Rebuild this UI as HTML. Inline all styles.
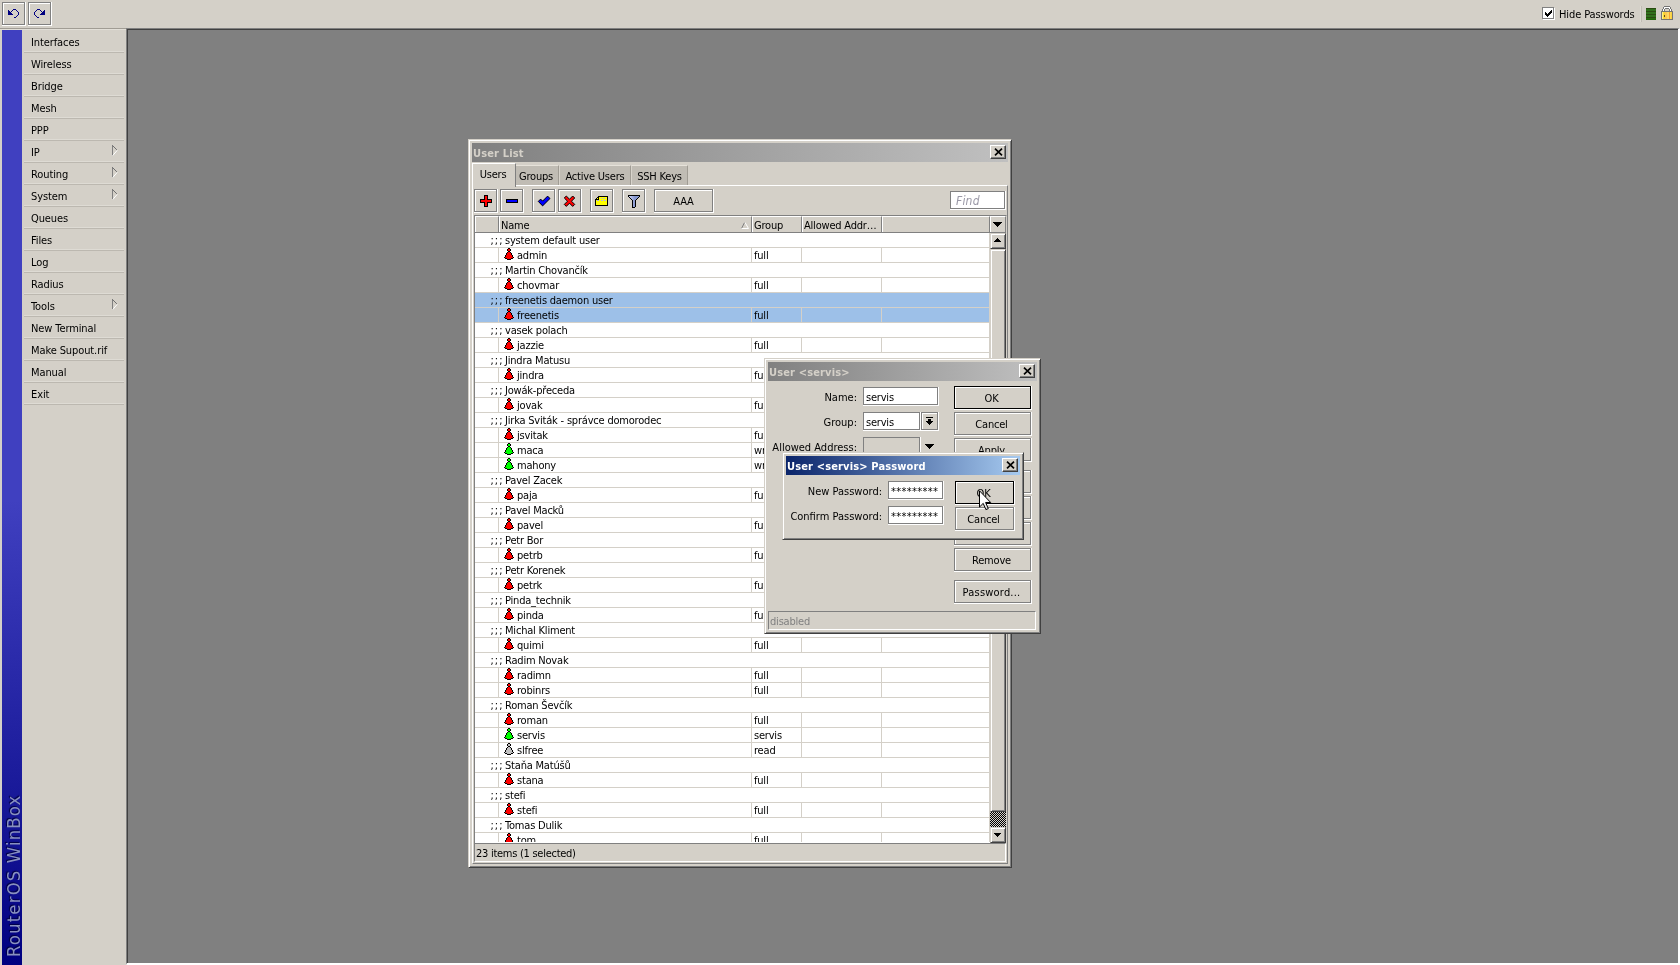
<!DOCTYPE html>
<html lang="en"><head><meta charset="utf-8"><title>WinBox</title>
<style>
*{box-sizing:border-box;margin:0;padding:0}
html,body{width:1680px;height:965px;overflow:hidden;background:#d4d0c8}
body{position:relative;font:11px/14px "DejaVu Sans Condensed","DejaVu Sans","Liberation Sans",sans-serif;font-stretch:condensed;letter-spacing:-0.2px;color:#000;-webkit-font-smoothing:none}
div,span,svg,b,i{position:absolute}
b{font-weight:normal}
svg{overflow:visible}
.px{shape-rendering:crispEdges}
/* etched button */
.eb{border:1px solid #808080;box-shadow:1px 1px 0 #fff,0 1px 0 #fff,1px 0 0 #fff,inset 1px 1px 0 #fff;background:#d4d0c8;text-align:center;white-space:nowrap}
.eb.def{border-color:#000}
.tb{width:23px;height:23px;top:189px}
.bt{width:77px;height:23px;left:954px;line-height:21px;padding:1px 2px 0 0}
/* window frame */
.win{background:#d4d0c8;border:1px solid;border-color:#d4d0c8 #404040 #404040 #d4d0c8;box-shadow:inset 1px 1px 0 #fff,inset -1px -1px 0 #808080}
.ttl{left:3px;top:3px;height:19px;font-weight:bold;line-height:19px;padding:1px 0 0 1px;white-space:nowrap;letter-spacing:0.15px}
.ttl.in{background:linear-gradient(90deg,#808080,#c0c0c0);color:#d4d0c8}
.ttl.ac{background:linear-gradient(90deg,#0a246a,#a6caf0);color:#fff}
.cls{width:16px;height:14px;background:#d4d0c8;border:1px solid;border-color:#fff #404040 #404040 #fff;box-shadow:inset -1px -1px 0 #808080}
.cls svg{left:3px;top:2px}
/* sunken field */
.fld{height:18px;background:#fff;border:1px solid #808080;box-shadow:1px 1px 0 #fff,0 1px 0 #fff,1px 0 0 #fff;line-height:14px;padding:3px 0 0 2px;white-space:nowrap;overflow:hidden}
.lbl{text-align:right;white-space:nowrap;line-height:14px;letter-spacing:0;margin:1px 0 0 1px}
.pw{letter-spacing:0.3px;padding-left:2px}
/* menu */
.mi{position:relative;display:block;height:22px;line-height:22px;letter-spacing:-0.1px;padding:1px 0 0 7px;margin:0 2px 0 2px;border-bottom:1px solid #bcb8b0;white-space:nowrap}
.mi:after{content:"";position:absolute;left:0;right:0;bottom:0;height:1px;background:#dedbd4}
.mi .arr{left:88px;top:4px}
/* table */
.r{position:relative;display:block;height:15px;border-bottom:1px solid #d4d0c8;width:514px;white-space:nowrap;overflow:hidden}
.r.sel{background:#9dc0e8}
.r span{top:1px;line-height:14px}
.r.c .s{left:15.5px;letter-spacing:1px}.r.c .t{left:30px}
.r.u span{left:42px}
.r.u b{left:279px;top:1px;line-height:14px}
.r.u .ic{left:29px;top:0;width:10px;height:12px}
.r.u i{top:0;width:1px;height:14px;background:#d4d0c8}
.r.u i:nth-child(1){left:23px}.r.u i:nth-child(2){left:276px}.r.u i:nth-child(3){left:326px}.r.u i:nth-child(4){left:406px}
.hc{top:0;height:16px;background:#d4d0c8;border:1px solid;border-color:#fff #808080 #d4d0c8 #fff;border-bottom:0;line-height:14px;padding:2px 0 0 1px;white-space:nowrap;overflow:hidden}
.tab{background:#c0bcb4;border-right:1px solid #a09c94;border-left:1px solid #d8d4cc;border-top:1px solid #e6e2da;top:25px;height:20px;line-height:14px;padding:4px 0 0 0;text-align:center;white-space:nowrap}
</style></head><body><div id="root" style="left:0;top:0;width:1680px;height:965px;will-change:transform">
<svg width="0" height="0"><defs><symbol id="ur" viewBox="0 0 10 12"><path d="M4 0h2v1h-2zM3 1h1v1h-1zM6 1h1v1h-1zM3 2h1v1h-1zM6 2h1v1h-1zM4 3h2v1h-2zM3 4h1v1h-1zM6 4h1v1h-1zM2 5h1v1h-1zM7 5h1v1h-1zM2 6h1v1h-1zM7 6h1v1h-1zM1 7h1v1h-1zM8 7h1v1h-1zM1 8h1v1h-1zM8 8h1v1h-1zM0 9h1v1h-1zM9 9h1v1h-1zM1 10h2v1h-2zM7 10h2v1h-2zM3 11h4v1h-4z" fill="#000"/><path d="M4 1h2v1h-2zM4 2h2v1h-2zM4 4h2v1h-2zM3 5h4v1h-4zM3 6h4v1h-4zM2 7h6v1h-6zM2 8h6v1h-6zM1 9h8v1h-8zM3 10h4v1h-4z" fill="#ff0000"/></symbol><symbol id="ug" viewBox="0 0 10 12"><path d="M4 0h2v1h-2zM3 1h1v1h-1zM6 1h1v1h-1zM3 2h1v1h-1zM6 2h1v1h-1zM4 3h2v1h-2zM3 4h1v1h-1zM6 4h1v1h-1zM2 5h1v1h-1zM7 5h1v1h-1zM2 6h1v1h-1zM7 6h1v1h-1zM1 7h1v1h-1zM8 7h1v1h-1zM1 8h1v1h-1zM8 8h1v1h-1zM0 9h1v1h-1zM9 9h1v1h-1zM1 10h2v1h-2zM7 10h2v1h-2zM3 11h4v1h-4z" fill="#000"/><path d="M4 1h2v1h-2zM4 2h2v1h-2zM4 4h2v1h-2zM3 5h4v1h-4zM3 6h4v1h-4zM2 7h6v1h-6zM2 8h6v1h-6zM1 9h8v1h-8zM3 10h4v1h-4z" fill="#00ff00"/></symbol><symbol id="uw" viewBox="0 0 10 12"><path d="M4 0h2v1h-2zM3 1h1v1h-1zM6 1h1v1h-1zM3 2h1v1h-1zM6 2h1v1h-1zM4 3h2v1h-2zM3 4h1v1h-1zM6 4h1v1h-1zM2 5h1v1h-1zM7 5h1v1h-1zM2 6h1v1h-1zM7 6h1v1h-1zM1 7h1v1h-1zM8 7h1v1h-1zM1 8h1v1h-1zM8 8h1v1h-1zM0 9h1v1h-1zM9 9h1v1h-1zM1 10h2v1h-2zM7 10h2v1h-2zM3 11h4v1h-4z" fill="#000"/><path d="M4 1h2v1h-2zM4 2h2v1h-2zM4 4h2v1h-2zM3 5h4v1h-4zM3 6h4v1h-4zM2 7h6v1h-6zM2 8h6v1h-6zM1 9h8v1h-8zM3 10h4v1h-4z" fill="#c0c0c0"/></symbol></defs></svg>

<!-- top toolbar -->
<div class="eb" style="left:2px;top:2px;width:23px;height:23px"></div>
<div class="eb" style="left:28px;top:2px;width:23px;height:23px"></div>
<svg class="px" style="left:0;top:0" width="56" height="28" viewBox="0 0 56 28"><path fill="#000080" d="M13 9h1v1h-1zM14 9h1v1h-1zM15 9h1v1h-1zM12 10h1v1h-1zM11 11h1v1h-1zM16 10h1v1h-1zM17 11h1v1h-1zM18 12h1v1h-1zM18 13h1v1h-1zM18 14h1v1h-1zM17 15h1v1h-1zM16 16h1v1h-1zM14 17h1v1h-1zM15 17h1v1h-1zM8 10h1v1h-1zM8 11h1v1h-1zM9 11h1v1h-1zM8 12h1v1h-1zM9 12h1v1h-1zM10 12h1v1h-1zM8 13h1v1h-1zM9 13h1v1h-1zM10 13h1v1h-1zM11 13h1v1h-1zM8 14h1v1h-1zM9 14h1v1h-1zM10 14h1v1h-1zM11 14h1v1h-1zM12 14h1v1h-1zM39 9h1v1h-1zM38 9h1v1h-1zM37 9h1v1h-1zM40 10h1v1h-1zM41 11h1v1h-1zM36 10h1v1h-1zM35 11h1v1h-1zM34 12h1v1h-1zM34 13h1v1h-1zM34 14h1v1h-1zM35 15h1v1h-1zM36 16h1v1h-1zM38 17h1v1h-1zM37 17h1v1h-1zM44 10h1v1h-1zM44 11h1v1h-1zM43 11h1v1h-1zM44 12h1v1h-1zM43 12h1v1h-1zM42 12h1v1h-1zM44 13h1v1h-1zM43 13h1v1h-1zM42 13h1v1h-1zM41 13h1v1h-1zM44 14h1v1h-1zM43 14h1v1h-1zM42 14h1v1h-1zM41 14h1v1h-1zM40 14h1v1h-1z"/></svg>
<div style="left:0;top:28px;width:126px;height:1px;background:#a09c94"></div>
<div style="left:0;top:29px;width:126px;height:1px;background:#e2dfd8"></div>

<div style="left:1542px;top:7px;width:12px;height:12px;background:#fff;border:1px solid #808080;box-shadow:1px 1px 0 #fff"></div>
<svg class="px" style="left:1542px;top:7px" width="13" height="13" viewBox="0 0 13 13"><path fill="#000" d="M3 5h1v3h-1zM4 6h1v3h-1zM5 7h1v3h-1zM6 6h1v3h-1zM7 5h1v3h-1zM8 4h1v3h-1zM9 3h1v3h-1z"/></svg>
<span style="left:1559px;top:8px;white-space:nowrap;letter-spacing:-0.1px">Hide Passwords</span>
<div style="left:1640px;top:6px;width:1px;height:16px;background:#dedad2"></div>
<div style="left:1641px;top:6px;width:1px;height:16px;background:#c0bcb4"></div>
<div style="left:1646px;top:8px;width:10px;height:12px;background:linear-gradient(180deg,#2a4c12 0,#2a4c12 1px,#30701c 1px,#30701c 3px,#2a4c12 3px,#2a4c12 4px,#30701c 4px,#30701c 6px,#2a4c12 6px,#2a4c12 7px,#30701c 7px,#30701c 9px,#2a4c12 9px,#2a4c12 10px,#2c6c14 10px,#1e6408 12px)"></div>
<svg class="px" style="left:1661px;top:6px" width="12" height="14" viewBox="0 0 12 14"><path fill="#747474" d="M3 0h6v1h-6zM2 1h1v2h-1zM9 1h1v2h-1zM4 2h4v1h-4zM1 3h1v2h-1zM3 3h1v2h-1zM8 3h1v2h-1zM10 3h1v2h-1z"/><path fill="#fff" d="M3 1h6v1h-6zM3 2h1v1h-1zM8 2h1v1h-1zM2 3h1v2h-1zM9 3h1v2h-1z"/><rect x="0" y="5" width="12" height="9" fill="#747474"/><rect x="1" y="6" width="1" height="7" fill="#fff088"/><rect x="2" y="6" width="1" height="7" fill="#fbdc38"/><rect x="3" y="6" width="1" height="7" fill="#f8d030"/><rect x="4" y="6" width="1" height="7" fill="#fcc850"/><rect x="5" y="6" width="1" height="7" fill="#fcc850"/><rect x="6" y="6" width="1" height="7" fill="#fcd860"/><rect x="7" y="6" width="1" height="7" fill="#fcd860"/><rect x="8" y="6" width="1" height="7" fill="#f8a030"/><rect x="9" y="6" width="1" height="7" fill="#fcd850"/><rect x="10" y="6" width="1" height="7" fill="#f8d040"/><rect x="3" y="9" width="1" height="2" fill="#604810"/></svg>

<!-- sidebar -->
<div style="left:2px;top:30px;width:20px;height:935px;background:linear-gradient(180deg,#4040c0 0,#4040c0 470px,#2828a8 650px,#0c0c8c 860px,#000080 935px);overflow:hidden">
<span style="left:2px;top:927px;transform-origin:0 0;transform:rotate(-90deg);font:condensed 18.4px/20px 'DejaVu Sans Condensed','DejaVu Sans','Liberation Sans',sans-serif;letter-spacing:1.15px;color:#8890c0;text-shadow:1px -1px 1px #000040;white-space:nowrap">RouterOS WinBox</span>
</div>

<!-- menu -->
<div style="left:22px;top:31px;width:104px;height:400px">
<div class="mi">Interfaces</div>
<div class="mi">Wireless</div>
<div class="mi">Bridge</div>
<div class="mi">Mesh</div>
<div class="mi">PPP</div>
<div class="mi">IP<svg class="arr" width="6" height="11" viewBox="0 0 6 11"><path d="M0.5 0V10.4" stroke="#808080" fill="none"/><path d="M0.5 0.5L4.9 4.9" stroke="#707070" fill="none"/><path d="M5.2 5.4L0.7 10.6" stroke="#fff" fill="none"/></svg></div>
<div class="mi">Routing<svg class="arr" width="6" height="11" viewBox="0 0 6 11"><path d="M0.5 0V10.4" stroke="#808080" fill="none"/><path d="M0.5 0.5L4.9 4.9" stroke="#707070" fill="none"/><path d="M5.2 5.4L0.7 10.6" stroke="#fff" fill="none"/></svg></div>
<div class="mi">System<svg class="arr" width="6" height="11" viewBox="0 0 6 11"><path d="M0.5 0V10.4" stroke="#808080" fill="none"/><path d="M0.5 0.5L4.9 4.9" stroke="#707070" fill="none"/><path d="M5.2 5.4L0.7 10.6" stroke="#fff" fill="none"/></svg></div>
<div class="mi">Queues</div>
<div class="mi">Files</div>
<div class="mi">Log</div>
<div class="mi">Radius</div>
<div class="mi">Tools<svg class="arr" width="6" height="11" viewBox="0 0 6 11"><path d="M0.5 0V10.4" stroke="#808080" fill="none"/><path d="M0.5 0.5L4.9 4.9" stroke="#707070" fill="none"/><path d="M5.2 5.4L0.7 10.6" stroke="#fff" fill="none"/></svg></div>
<div class="mi">New Terminal</div>
<div class="mi">Make Supout.rif</div>
<div class="mi">Manual</div>
<div class="mi">Exit</div>
</div>

<!-- MDI -->
<div style="left:126px;top:28px;width:1554px;height:937px;background:#808080;border-style:solid;border-width:1px 2px 2px 1px;border-color:#808080 #fff #fff #808080;box-shadow:inset 1px 1px 0 #404040"></div>

<!-- User List window -->
<div class="win" style="left:468px;top:139px;width:544px;height:729px">
 <div class="ttl in" style="width:536px">User List</div>
 <div class="cls" style="left:521px;top:5px"><svg width="9" height="8" viewBox="0 0 9 8"><path d="M1 0.7L8 7.3M8 0.7L1 7.3" stroke="#000" stroke-width="1.7" fill="none"/></svg></div>
 <!-- tabs: coordinates relative to window (468,139) -->
 <div class="tab" style="left:46px;width:44px;padding-right:2px;border-left-color:#c0bcb4">Groups</div>
 <div class="tab" style="left:90px;width:72px">Active Users</div>
 <div class="tab" style="left:162px;width:57px">SSH Keys</div>
 <div style="left:3px;top:45px;width:536px;height:679px;border:1px solid;border-color:#fff #808080 #808080 #fff"></div>
 <div style="left:3px;top:23px;width:44px;height:24px;background:#d4d0c8;border:1px solid;border-color:#fff #808080 #d4d0c8 #fff;border-bottom:0;line-height:14px;padding:4px 2px 0 0;text-align:center">Users</div>
</div>

<!-- list toolbar -->
<div class="eb tb" style="left:474px"></div>
<div class="eb tb" style="left:500px"></div>
<div class="eb tb" style="left:532px"></div>
<div class="eb tb" style="left:558px"></div>
<div class="eb tb" style="left:590px"></div>
<div class="eb tb" style="left:622px"></div>
<div class="eb tb" style="left:654px;width:59px;line-height:21px;padding-top:1px">AAA</div>
<svg style="left:474px;top:189px" width="180" height="23" viewBox="0 0 180 23">
 <path class="px" d="M10 6h4v4h4v4h-4v4h-4v-4h-4v-4h4z" fill="#000"/><path class="px" d="M11 7h2v4h4v2h-4v4h-2v-4h-4v-2h4z" fill="#f00"/>
 <rect class="px" x="32" y="10" width="12" height="4" fill="#000"/><rect class="px" x="33" y="11" width="10" height="2" fill="#00f"/>
 <path d="M64.3 12.4l2.3-2.3 2 2 5-5 2.4 2.4-7.4 7.4z" fill="#00f" stroke="#000" stroke-width="1"/>
 <path d="M90.3 9l2-2 3.2 3.2 3.2-3.2 2 2-3.2 3.2 3.2 3.2-2 2-3.2-3.2-3.2 3.2-2-2 3.2-3.2z" fill="#f00" stroke="#000" stroke-width="1"/>
 <path class="px" d="M124 7h10v1h-10zM123 8h2v1h-2zM133 8h1v1h-1zM122 9h1v1h-1zM124 9h1v1h-1zM133 9h1v1h-1zM121 10h4v1h-4zM133 10h1v1h-1zM121 11h1v1h-1zM121 12h1v1h-1zM121 13h1v1h-1zM121 14h1v1h-1zM121 15h1v1h-1zM133 11h1v1h-1zM133 12h1v1h-1zM133 13h1v1h-1zM133 14h1v1h-1zM133 15h1v1h-1zM121 16h13v1h-13z" fill="#000"/><path class="px" d="M125 8h8v1h-8zM123 9h1v1h-1zM125 9h8v1h-8zM125 10h8v1h-8zM122 11h11v1h-11zM122 12h11v1h-11zM122 13h11v1h-11zM122 14h11v1h-11zM122 15h11v1h-11z" fill="#ff0"/><path class="px" d="M127 9h1v1h-1zM129 9h2v1h-2zM123 11h2v1h-2zM127 11h2v1h-2zM130 11h2v1h-2z" fill="#b4b4dc"/>
 <defs><linearGradient id="fg" gradientUnits="userSpaceOnUse" x1="155" x2="165"><stop offset="0" stop-color="#ccd4f4"/><stop offset="0.35" stop-color="#a4b0e0"/><stop offset="0.6" stop-color="#8494cc"/><stop offset="1" stop-color="#8c9cd4"/></linearGradient></defs>
 <path class="px" d="M155 7h10v1h-10zM156 8h8v1h-8zM157 9h6v1h-6zM158 10h4v1h-4zM159 11h2v1h-2zM159 12h2v1h-2zM159 13h2v1h-2zM159 14h2v1h-2zM159 15h2v1h-2zM159 16h2v1h-2zM159 17h2v1h-2z" fill="url(#fg)"/><path class="px" d="M154 6h12v1h-12zM154 7h1v1h-1zM165 7h1v1h-1zM155 8h1v1h-1zM164 8h1v1h-1zM156 9h1v1h-1zM163 9h1v1h-1zM157 10h1v1h-1zM162 10h1v1h-1zM158 11h1v1h-1zM161 11h1v1h-1zM158 12h1v1h-1zM161 12h1v1h-1zM158 13h1v1h-1zM161 13h1v1h-1zM158 14h1v1h-1zM161 14h1v1h-1zM158 15h1v1h-1zM161 15h1v1h-1zM158 16h1v1h-1zM161 16h1v1h-1zM158 17h1v1h-1zM161 17h1v1h-1zM158 18h3v1h-3z" fill="#000"/>
</svg>
<div class="fld" style="left:950px;top:191px;width:55px;height:18px;line-height:14px;padding:2px 0 0 5px;font-style:italic;color:#9a98a6;font-size:12px;letter-spacing:0.2px">Find</div>

<!-- table -->
<div style="left:474px;top:215px;width:533px;height:628px;background:#fff;border:1px solid;border-color:#808080 #d4d0c8 #fff #808080;border-bottom:0;overflow:hidden">
 <div style="left:0;top:0;width:531px;height:17px;background:#d4d0c8;border-bottom:1px solid #808080">
  <div class="hc" style="left:0;width:24px"></div>
  <div class="hc" style="left:24px;width:253px">Name<svg style="left:241px;top:5px" width="8" height="7" viewBox="0 0 8 7"><path d="M0.5 6.5L3.5 0.5" stroke="#808080" fill="none"/><path d="M4 0.5L7.5 6.5H0.5" stroke="#fff" fill="none"/></svg></div>
  <div class="hc" style="left:277px;width:50px">Group</div>
  <div class="hc" style="left:327px;width:80px">Allowed Addr…</div>
  <div class="hc" style="left:407px;width:108px"></div>
  <div class="hc" style="left:515px;width:16px"><svg class="px" style="left:2px;top:5px" width="9" height="5" viewBox="0 0 9 5"><path d="M0 0h9v1h-9zM1 1h7v1h-7zM2 2h5v1h-5zM3 3h3v1h-3zM4 4h1v1h-1z" fill="#000"/></svg></div>
 </div>
 <div style="left:0;top:17px;width:515px;height:609px;border-right:1px solid #d4d0c8;overflow:hidden">
<div class="r c"><span class="s">;;;</span><span class="t">system default user</span></div>
<div class="r u"><i></i><i></i><i></i><i></i><svg class="ic"><use href="#ur"/></svg><span>admin</span><b>full</b></div>
<div class="r c"><span class="s">;;;</span><span class="t">Martin Chovančík</span></div>
<div class="r u"><i></i><i></i><i></i><i></i><svg class="ic"><use href="#ur"/></svg><span>chovmar</span><b>full</b></div>
<div class="r c sel"><span class="s">;;;</span><span class="t">freenetis daemon user</span></div>
<div class="r u sel"><i></i><i></i><i></i><i></i><svg class="ic"><use href="#ur"/></svg><span>freenetis</span><b>full</b></div>
<div class="r c"><span class="s">;;;</span><span class="t">vasek polach</span></div>
<div class="r u"><i></i><i></i><i></i><i></i><svg class="ic"><use href="#ur"/></svg><span>jazzie</span><b>full</b></div>
<div class="r c"><span class="s">;;;</span><span class="t">Jindra Matusu</span></div>
<div class="r u"><i></i><i></i><i></i><i></i><svg class="ic"><use href="#ur"/></svg><span>jindra</span><b>full</b></div>
<div class="r c"><span class="s">;;;</span><span class="t">Jowák-přeceda</span></div>
<div class="r u"><i></i><i></i><i></i><i></i><svg class="ic"><use href="#ur"/></svg><span>jovak</span><b>full</b></div>
<div class="r c"><span class="s">;;;</span><span class="t">Jirka Sviták - správce domorodec</span></div>
<div class="r u"><i></i><i></i><i></i><i></i><svg class="ic"><use href="#ur"/></svg><span>jsvitak</span><b>full</b></div>
<div class="r u"><i></i><i></i><i></i><i></i><svg class="ic"><use href="#ug"/></svg><span>maca</span><b>write</b></div>
<div class="r u"><i></i><i></i><i></i><i></i><svg class="ic"><use href="#ug"/></svg><span>mahony</span><b>write</b></div>
<div class="r c"><span class="s">;;;</span><span class="t">Pavel Zacek</span></div>
<div class="r u"><i></i><i></i><i></i><i></i><svg class="ic"><use href="#ur"/></svg><span>paja</span><b>full</b></div>
<div class="r c"><span class="s">;;;</span><span class="t">Pavel Macků</span></div>
<div class="r u"><i></i><i></i><i></i><i></i><svg class="ic"><use href="#ur"/></svg><span>pavel</span><b>full</b></div>
<div class="r c"><span class="s">;;;</span><span class="t">Petr Bor</span></div>
<div class="r u"><i></i><i></i><i></i><i></i><svg class="ic"><use href="#ur"/></svg><span>petrb</span><b>full</b></div>
<div class="r c"><span class="s">;;;</span><span class="t">Petr Korenek</span></div>
<div class="r u"><i></i><i></i><i></i><i></i><svg class="ic"><use href="#ur"/></svg><span>petrk</span><b>full</b></div>
<div class="r c"><span class="s">;;;</span><span class="t">Pinda_technik</span></div>
<div class="r u"><i></i><i></i><i></i><i></i><svg class="ic"><use href="#ur"/></svg><span>pinda</span><b>full</b></div>
<div class="r c"><span class="s">;;;</span><span class="t">Michal Kliment</span></div>
<div class="r u"><i></i><i></i><i></i><i></i><svg class="ic"><use href="#ur"/></svg><span>quimi</span><b>full</b></div>
<div class="r c"><span class="s">;;;</span><span class="t">Radim Novak</span></div>
<div class="r u"><i></i><i></i><i></i><i></i><svg class="ic"><use href="#ur"/></svg><span>radimn</span><b>full</b></div>
<div class="r u"><i></i><i></i><i></i><i></i><svg class="ic"><use href="#ur"/></svg><span>robinrs</span><b>full</b></div>
<div class="r c"><span class="s">;;;</span><span class="t">Roman Ševčík</span></div>
<div class="r u"><i></i><i></i><i></i><i></i><svg class="ic"><use href="#ur"/></svg><span>roman</span><b>full</b></div>
<div class="r u"><i></i><i></i><i></i><i></i><svg class="ic"><use href="#ug"/></svg><span>servis</span><b>servis</b></div>
<div class="r u"><i></i><i></i><i></i><i></i><svg class="ic"><use href="#uw"/></svg><span>slfree</span><b>read</b></div>
<div class="r c"><span class="s">;;;</span><span class="t">Staňa Matúšů</span></div>
<div class="r u"><i></i><i></i><i></i><i></i><svg class="ic"><use href="#ur"/></svg><span>stana</span><b>full</b></div>
<div class="r c"><span class="s">;;;</span><span class="t">stefi</span></div>
<div class="r u"><i></i><i></i><i></i><i></i><svg class="ic"><use href="#ur"/></svg><span>stefi</span><b>full</b></div>
<div class="r c"><span class="s">;;;</span><span class="t">Tomas Dulik</span></div>
<div class="r u"><i></i><i></i><i></i><i></i><svg class="ic"><use href="#ur"/></svg><span>tom</span><b>full</b></div>
 </div>
 <!-- scrollbar -->
 <div style="left:515px;top:17px;width:16px;height:610px;background:#d4d0c8">
  <div class="sbb" style="left:0;top:0;width:16px;height:16px;background:#d4d0c8;border:1px solid;border-color:#d4d0c8 #404040 #404040 #d4d0c8;box-shadow:inset 1px 1px 0 #fff,inset -1px -1px 0 #808080"><svg class="px" style="left:3px;top:4px" width="7" height="4" viewBox="0 0 7 4"><path d="M3 0h1v1h-1zM2 1h3v1h-3zM1 2h5v1h-5zM0 3h7v1h-7z"/></svg></div>
  <div style="left:0;top:16px;width:16px;height:563px;background:#d4d0c8;border:1px solid;border-color:#d4d0c8 #404040 #404040 #d4d0c8;box-shadow:inset 1px 1px 0 #fff,inset -1px -1px 0 #808080"></div>
  <div style="left:0;top:579px;width:16px;height:15px;background:repeating-conic-gradient(#000 0 25%,#d4d0c8 0 50%) 0 0/2px 2px"></div>
  <div style="left:0;top:594px;width:16px;height:16px;background:#d4d0c8;border:1px solid;border-color:#d4d0c8 #404040 #404040 #d4d0c8;box-shadow:inset 1px 1px 0 #fff,inset -1px -1px 0 #808080"><svg class="px" style="left:3px;top:5px" width="7" height="4" viewBox="0 0 7 4"><path d="M0 0h7v1h-7zM1 1h5v1h-5zM2 2h3v1h-3zM3 3h1v1h-1z"/></svg></div>
 </div>
</div>
<!-- list status bar -->
<div style="left:474px;top:843px;width:532px;height:19px;border:1px solid;border-color:#808080 #fff #fff #808080;line-height:14px;padding:3px 0 0 1px;white-space:nowrap;letter-spacing:-0.27px">23 items (1 selected)</div>

<!-- User <servis> dialog -->
<div class="win" style="left:764px;top:358px;width:277px;height:276px">
 <div class="ttl in" style="width:269px">User &lt;servis&gt;</div>
 <div class="cls" style="left:254px;top:5px"><svg width="9" height="8" viewBox="0 0 9 8"><path d="M1 0.7L8 7.3M8 0.7L1 7.3" stroke="#000" stroke-width="1.7" fill="none"/></svg></div>
</div>
<span class="lbl" style="left:766px;top:390px;width:90px">Name:</span>
<div class="fld" style="left:863px;top:387px;width:75px">servis</div>
<span class="lbl" style="left:766px;top:415px;width:90px">Group:</span>
<div class="fld" style="left:863px;top:412px;width:57px">servis</div>
<div class="eb" style="left:921px;top:412px;width:17px;height:18px"><svg class="px" style="left:3px;top:4px" width="9" height="8" viewBox="0 0 9 8"><path d="M1 0h7v1h-7zM3 2h3v2h-3zM1 4h7v1h-7zM2 5h5v1h-5zM3 6h3v1h-3zM4 7h1v1h-1z" fill="#000"/></svg></div>
<span class="lbl" style="left:766px;top:440px;width:90px">Allowed Address:</span>
<div class="fld" style="left:863px;top:437px;width:57px;background:#d4d0c8"></div>
<svg class="px" style="left:925px;top:444px" width="9" height="5" viewBox="0 0 9 5"><path d="M0 0h9v1h-9zM1 1h7v1h-7zM2 2h5v1h-5zM3 3h3v1h-3zM4 4h1v1h-1z" fill="#000"/></svg>
<div class="eb bt def" style="top:386px">OK</div>
<div class="eb bt" style="top:412px">Cancel</div>
<div class="eb bt" style="top:438px">Apply</div>
<div class="eb bt" style="top:470px">Enable</div>
<div class="eb bt" style="top:496px">Comment</div>
<div class="eb bt" style="top:522px">Copy</div>
<div class="eb bt" style="top:548px">Remove</div>
<div class="eb bt" style="top:580px;letter-spacing:0.2px">Password...</div>
<div style="left:768px;top:611px;width:268px;height:19px;border:1px solid;border-color:#808080 #fff #fff #808080;line-height:14px;padding:3px 0 0 1px;color:#808080;white-space:nowrap">disabled</div>

<!-- Password dialog -->
<div class="win" style="left:782px;top:452px;width:242px;height:88px">
 <div class="ttl ac" style="width:234px">User &lt;servis&gt; Password</div>
 <div class="cls" style="left:219px;top:5px"><svg width="9" height="8" viewBox="0 0 9 8"><path d="M1 0.7L8 7.3M8 0.7L1 7.3" stroke="#000" stroke-width="1.7" fill="none"/></svg></div>
</div>
<span class="lbl" style="left:786px;top:484px;width:95px">New Password:</span>
<div class="fld pw" style="left:888px;top:481px;width:55px">*********</div>
<span class="lbl" style="left:786px;top:509px;width:95px">Confirm Password:</span>
<div class="fld pw" style="left:888px;top:506px;width:55px">*********</div>
<div class="eb bt def" style="left:955px;top:481px;width:59px">OK</div>
<div class="eb bt" style="left:955px;top:507px;width:59px">Cancel</div>

<!-- cursor -->
<svg style="left:979px;top:490px" width="13" height="21" viewBox="0 0 13 21"><defs><linearGradient id="cg" x1="0" y1="0" x2="1" y2="1"><stop offset="0" stop-color="#fff"/><stop offset="0.5" stop-color="#fff"/><stop offset="1" stop-color="#c8c8c8"/></linearGradient></defs><path d="M0.5 0.8V17L4.2 13.4l2.7 6.2 2.4-1-2.7-6.1h5.1z" fill="url(#cg)" stroke="#000" stroke-width="1"/></svg>
</div></body></html>
